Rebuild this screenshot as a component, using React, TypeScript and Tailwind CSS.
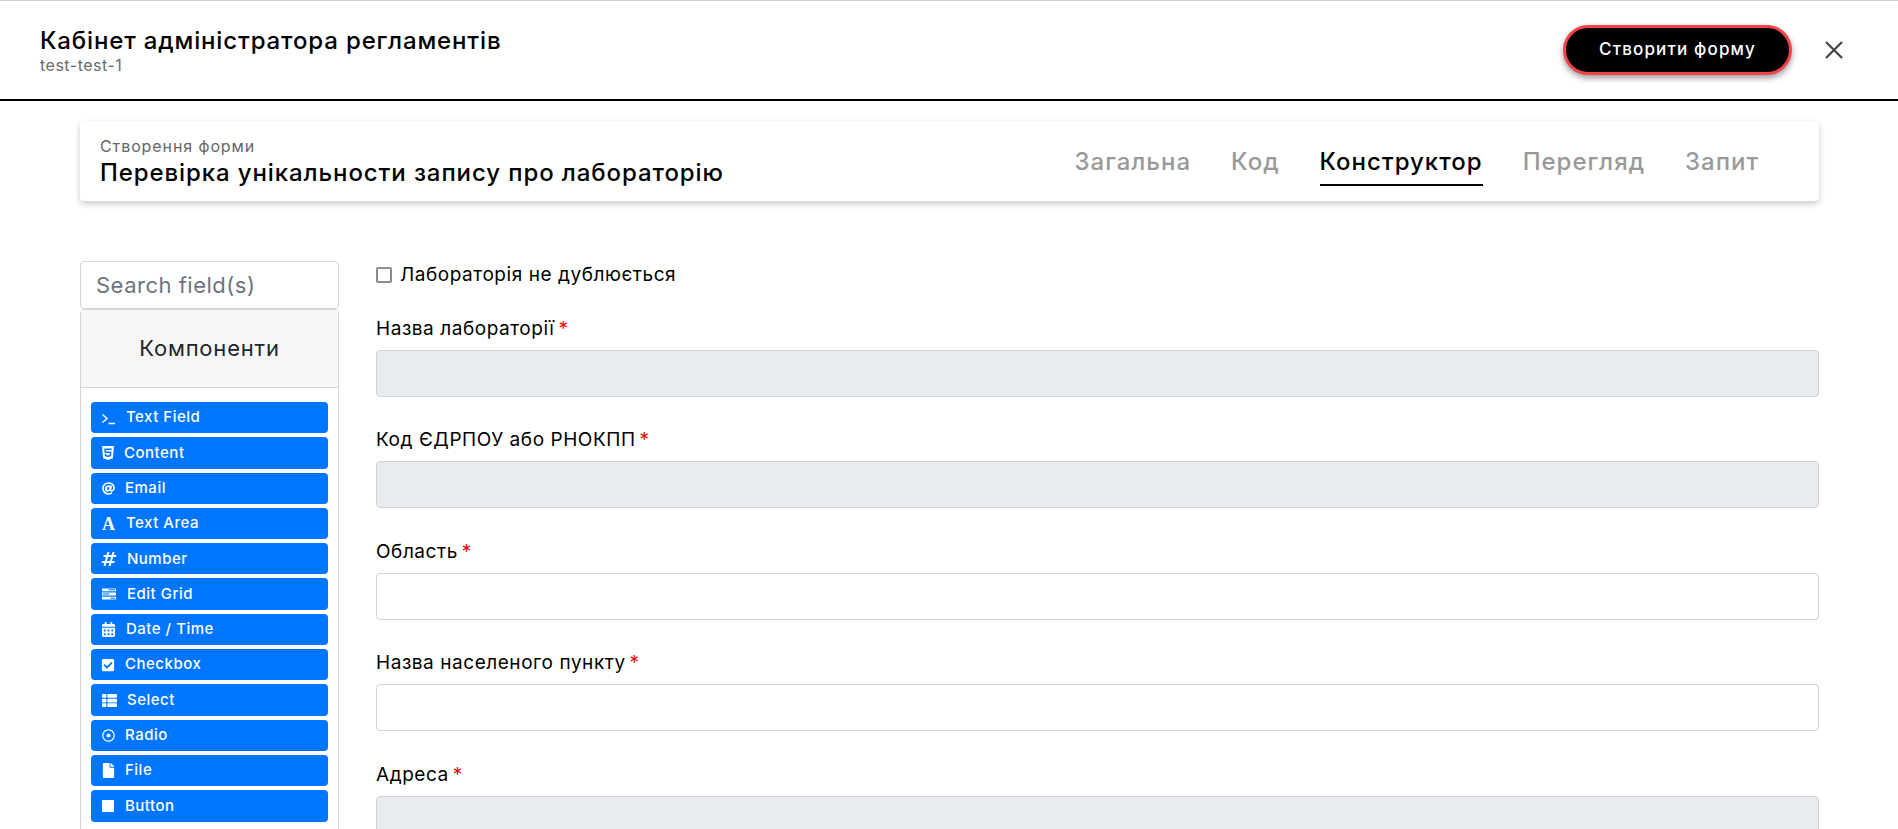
import { FaAt, FaCalendarAlt, FaCheckSquare, FaFile, FaHashtag, FaHtml5, FaRegDotCircle, FaThList } from 'react-icons/fa';
import type { ReactNode } from 'react';

const tabs = ['Загальна', 'Код', 'Конструктор', 'Перегляд', 'Запит'];

function TerminalIcon() {
    return (
        <svg viewBox="0 0 13 14" className="h-[14px] w-[13px]" fill="none" stroke="currentColor" strokeWidth="1.4">
            <path d="M0.5 3.5 5 7.5 0.5 11.5M6.5 12.5H13" />
        </svg>
    );
}

function GridIcon() {
    return (
        <svg viewBox="0 0 15 12" className="h-3 w-[15px]" fill="currentColor">
            <path d="M0 0h15v3H0zM0 4.5h15v3H0zM0 9h15v3H0z" />
            <path d="M7 1h7v1H7zM1 5.5h7v1H1zM9 10h5v1H9z" fill="#0075ff" />
        </svg>
    );
}

const components: { label: string; icon: ReactNode; width: string }[] = [
    { label: 'Text Field', icon: <TerminalIcon />, width: 'w-[13px]' },
    { label: 'Content', icon: <FaHtml5 className="h-4 w-4 shrink-0" />, width: 'w-[11px]' },
    { label: 'Email', icon: <FaAt className="h-[13px] w-[13px] shrink-0" />, width: 'w-3' },
    { label: 'Text Area', icon: <span className="font-['Liberation_Serif',serif] text-[18px] leading-none font-bold tracking-normal">A</span>, width: 'w-[13px]' },
    { label: 'Number', icon: <FaHashtag className="h-4 w-4 shrink-0 -skew-x-6" />, width: 'w-[14px]' },
    { label: 'Edit Grid', icon: <GridIcon />, width: 'w-[14px]' },
    { label: 'Date / Time', icon: <FaCalendarAlt className="h-[15px] w-[15px] shrink-0" />, width: 'w-[13px]' },
    { label: 'Checkbox', icon: <FaCheckSquare className="h-[14px] w-[14px] shrink-0" />, width: 'w-3' },
    { label: 'Select', icon: <FaThList className="h-[15px] w-[15px] shrink-0" />, width: 'w-[14px]' },
    { label: 'Radio', icon: <FaRegDotCircle className="h-[13px] w-[13px] shrink-0" />, width: 'w-3' },
    { label: 'File', icon: <FaFile className="h-[15px] w-[15px] shrink-0" />, width: 'w-3' },
    { label: 'Button', icon: <span className="block h-3 w-3 shrink-0 bg-white" />, width: 'w-3' },
];

const fields = [
    { label: 'Назва лабораторії', disabled: true },
    { label: 'Код ЄДРПОУ або РНОКПП', disabled: true },
    { label: 'Область', disabled: false },
    { label: 'Назва населеного пункту', disabled: false },
    { label: 'Адреса', disabled: true },
];

export default function App() {
    return (
        <div className="h-screen overflow-hidden bg-white font-['Inter',sans-serif] text-black">
            <header className="flex h-[101px] items-center justify-between border-t border-b-2 border-t-[#cccccc] border-b-black pr-[54px] pl-10">
                <div>
                    <h1 className="text-[24px] leading-[28px] font-medium tracking-[0.85px]">Кабінет адміністратора регламентів</h1>
                    <p className="mt-[2px] text-[16px] leading-4 tracking-[0.5px] text-[#6b6b6b]">test-test-1</p>
                </div>
                <div className="flex items-center gap-[32px]">
                    <button className="h-[50px] w-[229px] rounded-full border-[3px] border-[#f0444a] bg-black text-[17px] font-medium tracking-[1.15px] text-white shadow-[0_3px_6px_rgba(0,0,0,0.4)]">
                        Створити форму
                    </button>
                    <svg width="20" height="20" viewBox="0 0 20 20" fill="none" stroke="#444" strokeWidth="2.2">
                        <path d="M2 2 18 18M18 2 2 18" />
                    </svg>
                </div>
            </header>

            <main className="pt-5 pr-[79px] pl-20">
                <section className="flex h-[80px] items-center justify-between rounded bg-white pr-[60px] pl-5 shadow-[0_3px_6px_rgba(0,0,0,0.2)]">
                    <div>
                        <p className="text-[16px] leading-5 tracking-[0.9px] text-[#666666]">Створення форми</p>
                        <h2 className="mt-[3px] text-[24px] leading-7 font-medium tracking-[0.9px]">Перевірка унікальности запису про лабораторію</h2>
                    </div>
                    <nav className="mt-[10px] flex gap-10 text-[24px] font-medium tracking-[1px]">
                        {tabs.map((tab) => (
                            <span
                                key={tab}
                                className={tab === 'Конструктор' ? 'border-b-2 border-black pb-[6px] leading-8' : 'border-b-2 border-transparent pb-[6px] leading-8 text-[#999999]'}
                            >
                                {tab}
                            </span>
                        ))}
                    </nav>
                </section>

                <div className="mt-[60px] flex gap-[37px]">
                    <aside className="w-[259px] shrink-0">
                        <div className="flex h-[48px] items-center rounded border border-[#d5d8dd] px-[15px] text-[22px] tracking-[0.5px] text-[#6c757d]">
                            Search field(s)
                        </div>
                        <div className="rounded border border-[#d5d8dd]">
                            <div className="flex h-[78px] items-center justify-center border-b border-[#d5d8dd] bg-[#f7f7f7] text-[22px] tracking-[0.8px] text-[#212529]">
                                Компоненти
                            </div>
                            <div className="flex flex-col gap-1 px-[10px] pt-[14px] pb-5">
                                {components.map(({ label, icon, width }) => (
                                    <div key={label} className="flex h-[31.3px] items-center gap-[11px] rounded bg-[#0075ff] pl-[11px] text-[15px] font-medium tracking-[0.5px] text-white">
                                        <span className={`flex shrink-0 items-center justify-center ${width}`}>{icon}</span>
                                        {label}
                                    </div>
                                ))}
                            </div>
                        </div>
                    </aside>

                    <div className="min-w-0 flex-1 pt-[2px]">
                        <label className="flex items-center gap-2 text-[19px] leading-6 tracking-[0.55px]">
                            <span className="h-4 w-4 rounded-[2px] border-2 border-[#8a8a90]" />
                            Лабораторія не дублюється
                        </label>
                        <div className="mt-[30px] flex flex-col gap-[31.4px]">
                            {fields.map((field) => (
                                <div key={field.label}>
                                    <p className="mb-[9px] text-[19px] leading-6 tracking-[0.55px]">
                                        {field.label} <span className="-ml-[2px] text-red-600">*</span>
                                    </p>
                                    <div className={`h-[47px] rounded border border-[#ced4da] ${field.disabled ? 'bg-[#e9ecef]' : 'bg-white'}`} />
                                </div>
                            ))}
                        </div>
                    </div>
                </div>
            </main>
        </div>
    );
}
